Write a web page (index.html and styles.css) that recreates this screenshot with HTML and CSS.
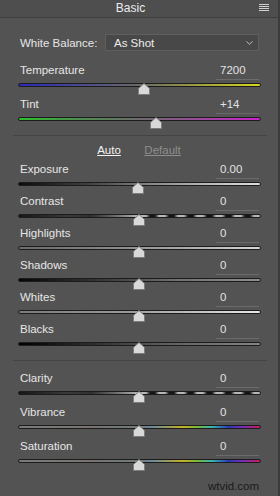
FILE: index.html
```html
<!DOCTYPE html>
<html>
<head>
<meta charset="utf-8">
<link rel="stylesheet" href="styles.css">
</head>
<body>
<div class="panel">
  <header class="hdr">
    <span class="title">Basic</span>
    <span class="menu">
      <svg width="10" height="8" viewBox="0 0 10 8"><g fill="#cfcfcf"><rect x="0" y="0" width="10" height="1"/><rect x="0" y="2" width="10" height="1"/><rect x="0" y="4" width="10" height="1"/><rect x="0" y="6" width="10" height="1"/></g></svg>
    </span>
  </header>

  <div class="wb">
    <span class="wb-label">White Balance:</span>
    <div class="select">
      <span>As Shot</span>
      <svg class="chev" width="7" height="4" viewBox="0 0 7 4"><path d="M0.5 0.5 L3.5 3.2 L6.5 0.5" fill="none" stroke="#bdbdbd" stroke-width="1"/></svg>
    </div>
  </div>

  <div class="row r34">
    <div class="head"><span class="lbl">Temperature</span><span class="val">7200</span></div>
    <div class="slider"><div class="track t-temp"></div><svg class="thumb" style="left:calc(51.9% - 6px)" viewBox="0 0 12 12"><polygon points="6,0.5 11.5,5.5 11.5,11.5 0.5,11.5 0.5,5.5"/></svg></div>
  </div>
  <div class="row r34">
    <div class="head"><span class="lbl">Tint</span><span class="val">+14</span></div>
    <div class="slider"><div class="track t-tint"></div><svg class="thumb" style="left:calc(56.8% - 6px)" viewBox="0 0 12 12"><polygon points="6,0.5 11.5,5.5 11.5,11.5 0.5,11.5 0.5,5.5"/></svg></div>
  </div>

  <div class="sep sep1"></div>

  <div class="links"><span class="auto">Auto</span><span class="default">Default</span></div>

  <div class="group g1">
    <div class="row r32">
      <div class="head"><span class="lbl">Exposure</span><span class="val">0.00</span></div>
      <div class="slider"><div class="track t-exp"></div><svg class="thumb" style="left:calc(49.5% - 6px)" viewBox="0 0 12 12"><polygon points="6,0.5 11.5,5.5 11.5,11.5 0.5,11.5 0.5,5.5"/></svg></div>
    </div>
    <div class="row r32">
      <div class="head"><span class="lbl">Contrast</span><span class="val">0</span></div>
      <div class="slider"><div class="track t-con"></div><svg class="thumb" style="left:calc(49.8% - 6px)" viewBox="0 0 12 12"><polygon points="6,0.5 11.5,5.5 11.5,11.5 0.5,11.5 0.5,5.5"/></svg></div>
    </div>
    <div class="row r32">
      <div class="head"><span class="lbl">Highlights</span><span class="val">0</span></div>
      <div class="slider"><div class="track t-hi"></div><svg class="thumb" style="left:calc(49.8% - 6px)" viewBox="0 0 12 12"><polygon points="6,0.5 11.5,5.5 11.5,11.5 0.5,11.5 0.5,5.5"/></svg></div>
    </div>
    <div class="row r32">
      <div class="head"><span class="lbl">Shadows</span><span class="val">0</span></div>
      <div class="slider"><div class="track t-sh"></div><svg class="thumb" style="left:calc(49.8% - 6px)" viewBox="0 0 12 12"><polygon points="6,0.5 11.5,5.5 11.5,11.5 0.5,11.5 0.5,5.5"/></svg></div>
    </div>
    <div class="row r32">
      <div class="head"><span class="lbl">Whites</span><span class="val">0</span></div>
      <div class="slider"><div class="track t-wh"></div><svg class="thumb" style="left:calc(49.8% - 6px)" viewBox="0 0 12 12"><polygon points="6,0.5 11.5,5.5 11.5,11.5 0.5,11.5 0.5,5.5"/></svg></div>
    </div>
    <div class="row r32">
      <div class="head"><span class="lbl">Blacks</span><span class="val">0</span></div>
      <div class="slider"><div class="track t-bl"></div><svg class="thumb" style="left:calc(49.8% - 6px)" viewBox="0 0 12 12"><polygon points="6,0.5 11.5,5.5 11.5,11.5 0.5,11.5 0.5,5.5"/></svg></div>
    </div>
  </div>

  <div class="sep sep2"></div>

  <div class="group g2">
    <div class="row r34">
      <div class="head"><span class="lbl">Clarity</span><span class="val">0</span></div>
      <div class="slider"><div class="track t-con"></div><svg class="thumb" style="left:calc(49.8% - 6px)" viewBox="0 0 12 12"><polygon points="6,0.5 11.5,5.5 11.5,11.5 0.5,11.5 0.5,5.5"/></svg></div>
    </div>
    <div class="row r34">
      <div class="head"><span class="lbl">Vibrance</span><span class="val">0</span></div>
      <div class="slider"><div class="track t-vib"></div><svg class="thumb" style="left:calc(49.8% - 6px)" viewBox="0 0 12 12"><polygon points="6,0.5 11.5,5.5 11.5,11.5 0.5,11.5 0.5,5.5"/></svg></div>
    </div>
    <div class="row r34">
      <div class="head"><span class="lbl">Saturation</span><span class="val">0</span></div>
      <div class="slider"><div class="track t-vib"></div><svg class="thumb" style="left:calc(49.8% - 6px)" viewBox="0 0 12 12"><polygon points="6,0.5 11.5,5.5 11.5,11.5 0.5,11.5 0.5,5.5"/></svg></div>
    </div>
  </div>

  <div class="mark">wtvid.com</div>
</div>
</body>
</html>
```

FILE: styles.css
```css
* { box-sizing: border-box; }
html, body { margin: 0; padding: 0; background: #535353; }
body {
  font-family: "Liberation Sans", Arial, sans-serif;
  font-size: 11.5px;
  color: #e4e4e4;
}
.panel {
  width: 280px;
  height: 496px;
  background: #535353;
  border-right: 2px solid #3c3c3c;
  overflow: hidden;
}
.hdr {
  height: 18px;
  background: #4e4e4e;
  border-bottom: 1px solid #3e3e3e;
  display: flex;
  align-items: center;
}
.title {
  flex: 1;
  text-align: center;
  line-height: 17px;
  font-size: 12px;
  color: #ececec;
  margin-right: -2px;
}
.menu {
  width: 16px;
  margin-right: 3px;
  display: flex;
  align-items: center;
  justify-content: flex-start;
  height: 17px;
  padding-bottom: 1px;
}
.wb {
  margin: 16px 19px 0 20px;
  display: flex;
  align-items: center;
  height: 17px;
}
.wb-label { width: 85px; color: #e6e6e6; }
.select {
  flex: 1;
  height: 17px;
  background: #484848;
  border: 1px solid #5f5f5f;
  display: flex;
  align-items: center;
  justify-content: space-between;
  padding: 0 5px 0 8px;
  color: #ececec;
}
.chev { margin-top: 1px; }

.row { margin: 0 17px 0 18px; }
.wb + .row { margin-top: 10px; }
.r34 { height: 34px; }
.r32 { height: 32px; }
.head {
  height: 19px;
  display: flex;
  justify-content: space-between;
  align-items: flex-start;
}
.lbl { line-height: 18px; padding-left: 2px; color: #e6e6e6; }
.val {
  width: 43px;
  height: 19px;
  margin-right: 2px;
  line-height: 18px;
  padding-left: 4px;
  border-bottom: 1px solid #6b6b6b;
  color: #e2e2e2;
}
.slider { position: relative; height: 12px; }
.track {
  margin-top: 3px;
  height: 4px;
  border: 1px solid #1c1c1c;
  border-radius: 2px;
}
.thumb {
  position: absolute;
  top: 0;
  width: 12px;
  height: 12px;
}
.thumb polygon { fill: #d9d9d9; stroke: #7c7c7c; stroke-width: 1; }

.t-temp { background: linear-gradient(to right, #2a2ab8 0%, #4a4a90 25%, #6a6a66 50%, #a0a040 75%, #d6d61e 100%); }
.t-tint { background: linear-gradient(to right, #2cc02c 0%, #4e8e4e 25%, #6c6c6c 50%, #9c4a9c 75%, #cc22cc 100%); }
.t-exp { background: linear-gradient(to right, #0a0a0a 0%, #444 30%, #888 55%, #bdbdbd 80%, #dedede 100%); }
.t-con {
  background:
    repeating-linear-gradient(to right, #b8b8b8 0px, #b8b8b8 6px, #151515 10px, #151515 15px, #b8b8b8 19px) right / 50% 100% no-repeat,
    linear-gradient(to right, #161616 0%, #3a3a3a 20%, #303030 30%, #6c6c6c 40%, #aaa 48%, #c4c4c4 50%);
}
.t-hi { background: linear-gradient(to right, #6a6a6a 0%, #8a8a8a 40%, #b4b4b4 75%, #d8d8d8 100%); }
.t-sh { background: linear-gradient(to right, #050505 0%, #3a3a3a 35%, #707070 65%, #8e8e8e 100%); }
.t-wh { background: linear-gradient(to right, #7a7a7a 0%, #9a9a9a 45%, #c4c4c4 75%, #e8e8e8 100%); }
.t-bl { background: linear-gradient(to right, #000 0%, #2e2e2e 30%, #5e5e5e 60%, #858585 100%); }
.t-vib { background: linear-gradient(to right, #7a7a7a 0%, #767a74 18%, #7c7070 30%, #6e7a78 42%, #787878 50%, #6a8a9a 55%, #a0a050 63%, #c8b020 68%, #7ab838 74%, #38b6b0 80%, #2a3ab8 87%, #7a2ab8 93%, #c81e5a 100%); }

.sep { height: 1px; background: #434343; margin-left: 13px; margin-right: 11px; }
.sep1 { margin-top: 6px; }
.sep2 { margin-top: 8px; }

.links {
  margin-top: 7px;
  height: 14px;
  line-height: 14px;
  display: flex;
  justify-content: center;
  gap: 23.5px;
}
.auto { color: #f2f2f2; text-decoration: underline; }
.default { color: #8e8e8e; text-decoration: underline; }
.g1 { margin-top: 3px; }
.g2 { margin-top: 8px; }

.mark {
  margin-top: 8px;
  height: 14px;
  line-height: 14px;
  text-align: right;
  padding-right: 19px;
  color: #1a1a1a;
  font-size: 11.5px;
}
```
